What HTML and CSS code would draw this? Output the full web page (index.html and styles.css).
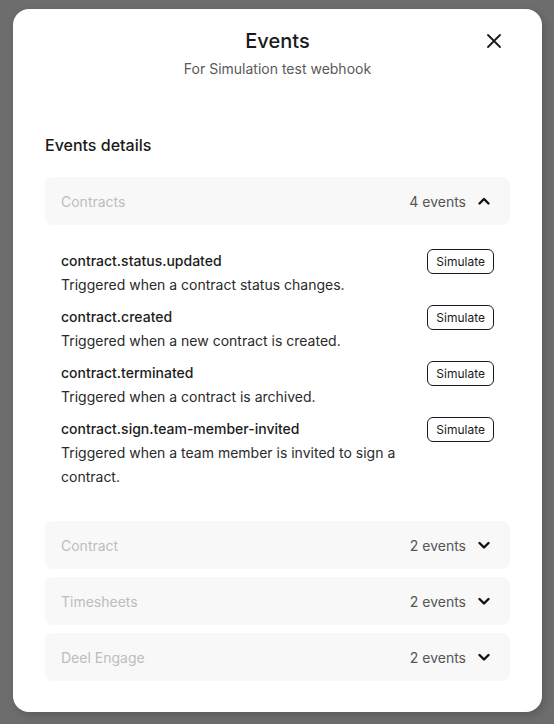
FILE: index.html
```html
<!DOCTYPE html>
<html lang="en">
<head>
<meta charset="utf-8">
<title>Events</title>
<link rel="stylesheet" href="styles.css">
</head>
<body>
<div class="backdrop">
  <div class="modal">
    <header class="modal-header">
      <h1 class="title">Events</h1>
      <p class="subtitle">For Simulation test webhook</p>
      <button class="close" aria-label="Close">
        <svg width="16" height="16" viewBox="0 0 16 16"><path d="M2 2 L14 14 M14 2 L2 14" stroke="#1a1a1a" stroke-width="1.8" stroke-linecap="round" fill="none"/></svg>
      </button>
    </header>

    <h2 class="section-title">Events details</h2>

    <div class="accordions">
      <div class="accordion open">
        <div class="acc-head">
          <span class="acc-label">Contracts</span>
          <span class="acc-meta">4 events
            <svg class="chev" width="20" height="20" viewBox="0 0 20 20"><path d="M5.5 12.5 L10 8 L14.5 12.5" stroke="#111" stroke-width="2.4" stroke-linecap="round" stroke-linejoin="round" fill="none"/></svg>
          </span>
        </div>
        <div class="acc-body">
          <div class="event">
            <div class="event-text">
              <div class="event-name">contract.status.updated</div>
              <div class="event-desc">Triggered when a contract status changes.</div>
            </div>
            <button class="sim">Simulate</button>
          </div>
          <div class="event">
            <div class="event-text">
              <div class="event-name">contract.created</div>
              <div class="event-desc">Triggered when a new contract is created.</div>
            </div>
            <button class="sim">Simulate</button>
          </div>
          <div class="event">
            <div class="event-text">
              <div class="event-name">contract.terminated</div>
              <div class="event-desc">Triggered when a contract is archived.</div>
            </div>
            <button class="sim">Simulate</button>
          </div>
          <div class="event">
            <div class="event-text">
              <div class="event-name">contract.sign.team-member-invited</div>
              <div class="event-desc">Triggered when a team member is invited to sign a contract.</div>
            </div>
            <button class="sim">Simulate</button>
          </div>
        </div>
      </div>

      <div class="accordion">
        <div class="acc-head">
          <span class="acc-label">Contract</span>
          <span class="acc-meta">2 events
            <svg class="chev" width="20" height="20" viewBox="0 0 20 20"><path d="M5.5 8 L10 12.5 L14.5 8" stroke="#111" stroke-width="2.4" stroke-linecap="round" stroke-linejoin="round" fill="none"/></svg>
          </span>
        </div>
      </div>

      <div class="accordion">
        <div class="acc-head">
          <span class="acc-label">Timesheets</span>
          <span class="acc-meta">2 events
            <svg class="chev" width="20" height="20" viewBox="0 0 20 20"><path d="M5.5 8 L10 12.5 L14.5 8" stroke="#111" stroke-width="2.4" stroke-linecap="round" stroke-linejoin="round" fill="none"/></svg>
          </span>
        </div>
      </div>

      <div class="accordion">
        <div class="acc-head">
          <span class="acc-label">Deel Engage</span>
          <span class="acc-meta">2 events
            <svg class="chev" width="20" height="20" viewBox="0 0 20 20"><path d="M5.5 8 L10 12.5 L14.5 8" stroke="#111" stroke-width="2.4" stroke-linecap="round" stroke-linejoin="round" fill="none"/></svg>
          </span>
        </div>
      </div>
    </div>
  </div>
</div>
</body>
</html>
```

FILE: styles.css
```css
* { box-sizing: border-box; }

html, body {
  margin: 0;
  padding: 0;
}

body {
  font-family: Inter, "Noto Sans", "Liberation Sans", sans-serif;
  color: #1c1c1c;
  background: #6d6d6d;
}

.backdrop {
  width: 554px;
  height: 724px;
  padding: 9px 12px 0 13px;
  background:
    linear-gradient(#6d6d6d, #6d6d6d) 0 0 / 100% 100% no-repeat;
  background-color: #6d6d6d;
}

.modal {
  position: relative;
  width: 529px;
  height: 703px;
  background: #fff;
  border-radius: 16px;
  padding: 18px 32px 31px;
  box-shadow: 2px 3px 8px rgba(0, 0, 0, 0.18);
}

.modal-header {
  display: flex;
  flex-direction: column;
  align-items: center;
  gap: 4px;
}

.title {
  margin: 0;
  font-size: 20px;
  line-height: 28px;
  font-weight: 500;
  color: #1a1a1a;
}

.subtitle {
  margin: 0;
  font-size: 14px;
  line-height: 20px;
  color: #5a5a5a;
}

.close {
  position: absolute;
  top: 20px;
  right: 36px;
  width: 24px;
  height: 24px;
  padding: 0;
  border: 0;
  background: transparent;
  display: flex;
  align-items: center;
  justify-content: center;
}

.section-title {
  margin: 54px 0 20px;
  font-size: 16px;
  line-height: 24px;
  font-weight: 500;
  color: #1a1a1a;
}

.accordions {
  display: flex;
  flex-direction: column;
  gap: 8px;
}

.acc-head {
  height: 48px;
  background: #f8f8f8;
  border-radius: 8px;
  display: flex;
  align-items: center;
  justify-content: space-between;
  padding: 0 16px;
  font-size: 14px;
}

.acc-label {
  color: #bdbdbd;
}

.acc-meta {
  display: flex;
  align-items: center;
  gap: 8px;
  color: #555;
}

.chev { display: block; }

.acc-body {
  padding: 24px 16px 24px;
  display: flex;
  flex-direction: column;
  gap: 8px;
}

.event {
  display: flex;
  justify-content: space-between;
  align-items: flex-start;
  gap: 24px;
}

.event-text {
  flex: 1;
  font-size: 14px;
  line-height: 24px;
}

.event-name {
  font-weight: 500;
  color: #1c1c1c;
}

.event-desc {
  color: #2a2a2a;
}

.sim {
  flex: none;
  height: 25px;
  padding: 0 8px;
  border: 1px solid #1a1a1a;
  border-radius: 6px;
  background: #fff;
  font-family: inherit;
  font-size: 12px;
  color: #1a1a1a;
  line-height: 1;
}
```
